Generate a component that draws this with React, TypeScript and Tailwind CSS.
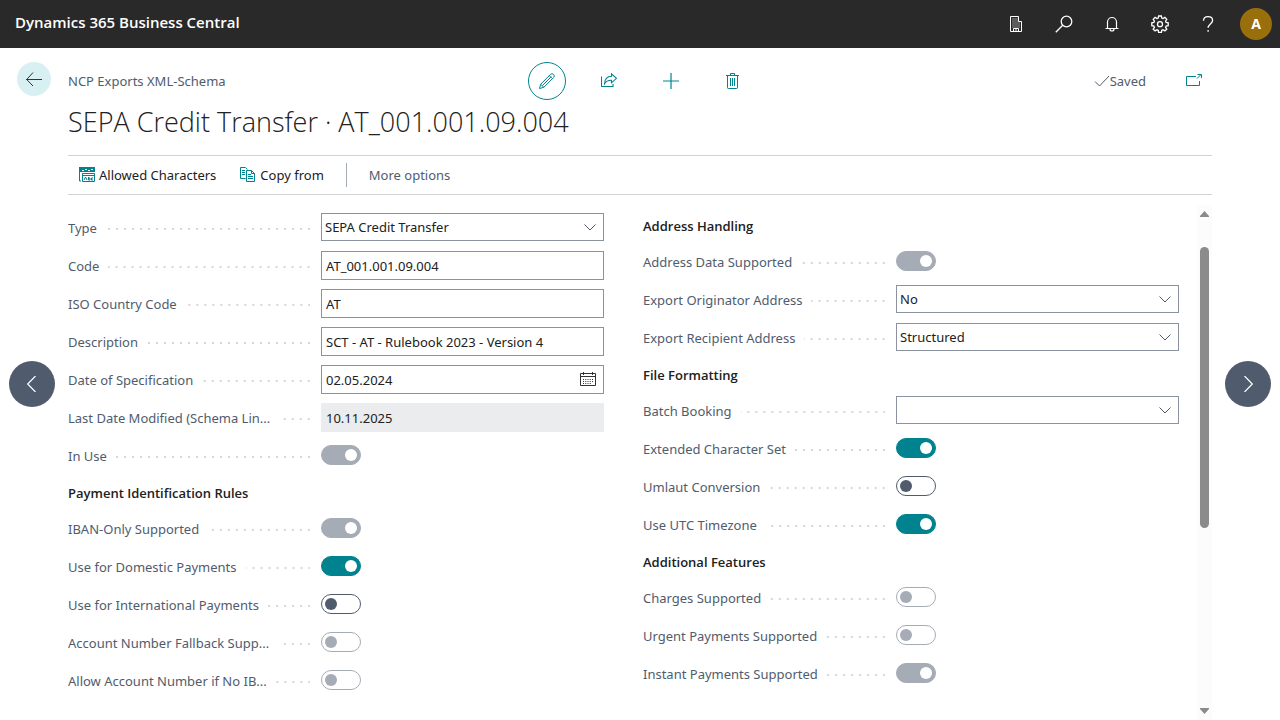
import { useId, type ReactNode } from "react";
import clsx from "clsx";

type IconProps = { children: ReactNode; className?: string; size?: number };

function Icon({ children, className, size = 16 }: IconProps) {
  return (
    <svg
      width={size}
      height={size}
      viewBox={`0 0 ${size} ${size}`}
      fill="none"
      stroke="currentColor"
      strokeWidth={1}
      className={clsx("shrink-0", className)}
      aria-hidden="true"
    >
      {children}
    </svg>
  );
}

function Chevron() {
  return (
    <Icon className="pointer-events-none absolute right-[6px] top-[6px] text-[#505c6d]">
      <path d="M2.5 5.5 8 11l5.5-5.5" />
    </Icon>
  );
}

function Row({ label, id, children }: { label: string; id: string; children: ReactNode }) {
  return (
    <div className="flex h-[38px] items-start">
      <div className="flex h-10 w-[253px] shrink-0 items-center">
        <label htmlFor={id} className="whitespace-nowrap text-[#505c6d]">
          {label}
        </label>
        <span className="ml-[9px] mr-[11px] h-[2px] flex-1 bg-[linear-gradient(to_left,#d4d6da_2px,transparent_2px)] bg-[length:8px_2px] bg-right bg-repeat-x" />
      </div>
      {children}
    </div>
  );
}

function Toggle({ label, on = false, disabled = false }: { label: string; on?: boolean; disabled?: boolean }) {
  const id = useId();
  return (
    <Row label={label} id={id}>
      <input
        id={id}
        type="checkbox"
        role="switch"
        defaultChecked={on}
        disabled={disabled}
        className="mt-2 flex h-5 w-10 appearance-none items-center rounded-full border border-[#505c6d] px-[3px] before:size-3 before:rounded-full before:bg-[#505c6d] checked:justify-end checked:border-[#00838f] checked:bg-[#00838f] checked:before:bg-white disabled:border-[#a6acb6] disabled:before:bg-[#a6acb6] disabled:checked:bg-[#a6acb6] disabled:checked:before:bg-white"
      />
    </Row>
  );
}

function Text({ label, value, readOnly = false }: { label: string; value: string; readOnly?: boolean }) {
  const id = useId();
  return (
    <Row label={label} id={id}>
      <input
        id={id}
        defaultValue={value}
        readOnly={readOnly}
        className={clsx(
          "mt-1 h-[29px] min-w-0 flex-1 border px-1 text-[#212121] outline-none",
          readOnly ? "border-[#ebecee] bg-[#ebecee]" : "border-[#8b93a1] bg-white"
        )}
      />
    </Row>
  );
}

function DateField({ label, value }: { label: string; value: string }) {
  const id = useId();
  return (
    <Row label={label} id={id}>
      <div className="mt-1 flex h-[29px] min-w-0 flex-1 items-center border border-[#8b93a1]">
        <input id={id} defaultValue={value} className="h-[27px] min-w-0 flex-1 px-1 text-[#212121] outline-none" />
        <button type="button" aria-label="Choose date" className="mr-[7px] text-[#333]">
          <Icon>
            <path d="M.5 1.5h15v12H.5zM.5 4.5h15M3.500 0v3M12.500 0v3" />
            <path d="M3 7.500h10M3 9.500h10M3 11.500h8" strokeDasharray="1 1.25" />
          </Icon>
        </button>
      </div>
    </Row>
  );
}

function Select({ label, value }: { label: string; value: string }) {
  const id = useId();
  return (
    <Row label={label} id={id}>
      <div className="relative mt-1 min-w-0 flex-1">
        <select
          id={id}
          defaultValue={value}
          className="block h-7 w-full appearance-none border border-[#8b93a1] bg-white px-[3px] pt-px text-[#212121] outline-none"
        >
          <option value={value}>{value}</option>
        </select>
        <Chevron />
      </div>
    </Row>
  );
}

function Heading({ children }: { children: ReactNode }) {
  return (
    <h2 className="flex h-[35px] items-center pt-[2px] font-['Open_Sans',sans-serif] font-semibold text-[#212121]">
      {children}
    </h2>
  );
}

function TopBar() {
  return (
    <header className="flex h-12 shrink-0 items-center justify-between bg-[#292929] pl-[15px] pr-2 text-white">
      <span className="pb-1 font-['Open_Sans',sans-serif] text-[15px] font-semibold">Dynamics 365 Business Central</span>
      <div className="flex items-center">
        <button type="button" aria-label="Company" className="flex w-12 justify-center">
          <Icon>
            <path d="M2.5.5h8v5h3v10h-11zM5.5 15.5v-3h5v3M8 13v2" />
            <path d="M4.5 3h5M4.5 5h5M4.5 7h8M4.5 9h8M4.5 11h8" strokeDasharray="1 1" />
          </Icon>
        </button>
        <button type="button" aria-label="Search" className="flex w-12 justify-center">
          <Icon size={18}>
            <circle cx="11.5" cy="6.5" r="5.3" strokeWidth="1.3" />
            <path d="M7.7 10.3.8 17.2" strokeWidth="1.3" />
          </Icon>
        </button>
        <button type="button" aria-label="Notifications" className="flex w-12 justify-center">
          <Icon>
            <path d="M3.5 12.5V6a4.5 4.5 0 0 1 9 0v6.5M1.5 12.5h13M6 13a2 2 0 0 0 4 0" strokeWidth="1.2" />
          </Icon>
        </button>
        <button type="button" aria-label="Settings" className="flex w-12 justify-center">
          <Icon size={18}>
            <path
              d="M7.6 1h2.800l.4 2.100 1.300.5 1.800-1.200 1.900 1.900-1.200 1.800.5 1.300 2.100.4v2.800l-2.100.4-.5 1.300 1.200 1.800-1.900 1.900-1.800-1.200-1.300.5-.4 2.100H7.600l-.4-2.100-1.300-.5-1.800 1.200-1.900-1.900 1.200-1.800-.5-1.300-2.100-.4V7.800l2.100-.4.5-1.300-1.200-1.800 1.900-1.900 1.800 1.200 1.300-.5z"
              strokeWidth="1.3"
            />
            <circle cx="9" cy="9.2" r="2.5" strokeWidth="1.3" />
          </Icon>
        </button>
        <button type="button" aria-label="Help" className="flex w-12 justify-center">
          <Icon>
            <path d="M3.5 4.8C3.5 2.300 5.300.7 8 .7s4.600 1.500 4.600 3.800c0 3.200-4.500 3.700-4.500 7.200M8.100 14v1.700" strokeWidth="1.3" />
          </Icon>
        </button>
        <button
          type="button"
          aria-label="Account"
          className="ml-2 flex size-8 items-center justify-center rounded-full bg-[#986f0b] text-sm font-bold"
        >
          A
        </button>
      </div>
    </header>
  );
}

function PageActions() {
  return (
    <div className="flex items-center gap-6 text-[#00838f]">
      <button
        type="button"
        aria-label="Edit"
        className="flex size-[38px] items-center justify-center rounded-full border border-[#00838f]"
      >
        <Icon size={18}>
          <path d="m1.5 16.5 1.2-4.3L12.6 2.3a2.2 2.2 0 0 1 3.1 3.1L5.8 15.3zM2.7 12.2l3.1 3.1M4.4 13.6l8.9-8.9M11.3 3.6l3.1 3.1" />
        </Icon>
      </button>
      <button type="button" aria-label="Share" className="flex size-[38px] items-center justify-center">
        <Icon>
          <path d="M.5 3.5v10H12V11M10.5.8l5 4.5-5 4.5V7.300C7 7.100 5.200 8.100 3.500 10.800 3.700 6.300 6 3.500 10.500 3.300z" strokeWidth="1.1" />
        </Icon>
      </button>
      <button type="button" aria-label="New" className="flex size-[38px] items-center justify-center">
        <Icon>
          <path d="M8 0v16M0 8h16" strokeWidth="1.2" />
        </Icon>
      </button>
      <button type="button" aria-label="Delete" className="flex size-[38px] items-center justify-center">
        <Icon>
          <path d="M1 2.5h13M5.5 2.5v-2h4v2M2.5 2.5v12.200a.8.8 0 0 0 .8.8h8.400a.8.8 0 0 0 .8-.8V2.500M5.500 5v8M7.500 5v8M9.500 5v8" />
        </Icon>
      </button>
    </div>
  );
}

function ScrollBar() {
  return (
    <div className="flex w-[15px] shrink-0 flex-col items-center bg-[#fcfcfc] py-[6px]" aria-hidden="true">
      <svg width="9" height="6" className="shrink-0 text-[#8b8b8b]" fill="currentColor">
        <path d="M4.5 0 9 5v1H0V5z" />
      </svg>
      <div className="flex w-[9px] flex-1 flex-col pt-[30px]">
        <div className="h-[61%] rounded-full bg-[#8b8b8b]" />
      </div>
      <svg width="9" height="6" className="shrink-0 text-[#8b8b8b]" fill="currentColor">
        <path d="M4.5 6 9 1V0H0v1z" />
      </svg>
    </div>
  );
}

export default function App() {
  return (
    <div className="flex h-screen flex-col overflow-hidden bg-white font-['Noto_Sans','Open_Sans',sans-serif] text-[13px] text-[#212121]">
      <TopBar />

      <div className="grid shrink-0 grid-cols-[1fr_auto_1fr] items-center pl-[17px] pr-[78px] pt-[14px]">
        <div className="flex items-center">
          <button
            type="button"
            aria-label="Back"
            className="mb-1 mr-[17px] flex size-[34px] items-center justify-center rounded-full bg-[#d9f0f2] text-[#333]"
          >
            <Icon>
              <path d="M0 8.5h16M7 1.5.7 8.5 7 15" />
            </Icon>
          </button>
          <a href="#" className="pt-[2px] text-[#505c6d]">
            NCP Exports XML-Schema
          </a>
        </div>
        <div className="ml-[61px]">
          <PageActions />
        </div>
        <div className="flex items-center justify-end text-[#505c6d]">
          <Icon>
            <path d="m1 8.5 4.5 4.5L15 3" />
          </Icon>
          <span className="pt-[2px]">Saved</span>
          <button type="button" aria-label="Open in new window" className="ml-10 text-[#00838f]">
            <Icon>
              <path d="M10 3.5H.5v9h13V8M11 5.5l4-4M11.5 1.5h4V5" />
            </Icon>
          </button>
        </div>
      </div>

      <main className="flex min-h-0 flex-1 flex-col px-[68px]">
        <h1 className="h-[55px] font-['Open_Sans',sans-serif] text-[27px] font-light leading-[44px]">
          SEPA Credit Transfer · AT_001.001.09.004
        </h1>

        <nav className="flex h-10 shrink-0 items-center border-y border-[#d0d2d6] pl-[11px]">
          <button type="button" className="flex items-center gap-1">
            <Icon className="text-[#00838f]">
              <path d="M0 0h16v5H0z" fill="currentColor" stroke="none" />
              <path d="M3 3.5h2M6 2.5h2M9 3.5h2M12 2.5h2" stroke="white" />
              <path d="M.5 5v9H2M3.5 6.5h12v8h-12zM3 8.5h12" />
              <path d="m5 13 1.5-3L8 13M9.5 10v3H11v-2H9.500M14 11h-1.500v2H14" />
            </Icon>
            <span className="pt-[2px]">Allowed Characters</span>
          </button>
          <button type="button" className="ml-6 flex items-center gap-1">
            <Icon className="text-[#00838f]">
              <path d="M5.5 11.5h-5V.5h5l2 2M2 3.5h3M2 5.5h3M2 7.5h3M6.5 3.5h5l3 3v8h-8zM11.5 3.5v3h3M8 7.5h3M8 9.5h5M8 11.5h5" />
            </Icon>
            <span className="pt-[2px]">Copy from</span>
          </button>
          <span className="mx-[22px] h-6 w-px bg-[#a6acb6]" />
          <button type="button" className="pt-[2px] text-[#505c6d]">
            More options
          </button>
        </nav>

        <div className="mt-[10px] flex min-h-0 flex-1">
          <form className="mr-[18px] grid min-w-0 flex-1 grid-cols-2 gap-x-[39px] overflow-hidden pt-[3px]">
            <section className="min-w-0 pt-px">
              <Select label="Type" value="SEPA Credit Transfer" />
              <Text label="Code" value="AT_001.001.09.004" />
              <Text label="ISO Country Code" value="AT" />
              <Text label="Description" value="SCT - AT - Rulebook 2023 - Version 4" />
              <DateField label="Date of Specification" value="02.05.2024" />
              <Text label="Last Date Modified (Schema Lin..." value="10.11.2025" readOnly />
              <Toggle label="In Use" on disabled />
              <Heading>Payment Identification Rules</Heading>
              <Toggle label="IBAN-Only Supported" on disabled />
              <Toggle label="Use for Domestic Payments" on />
              <Toggle label="Use for International Payments" />
              <Toggle label="Account Number Fallback Supp..." disabled />
              <Toggle label="Allow Account Number if No IB..." disabled />
            </section>
            <section className="min-w-0">
              <Heading>Address Handling</Heading>
              <Toggle label="Address Data Supported" on disabled />
              <Select label="Export Originator Address" value="No" />
              <Select label="Export Recipient Address" value="Structured" />
              <Heading>File Formatting</Heading>
              <Select label="Batch Booking" value="" />
              <Toggle label="Extended Character Set" on />
              <Toggle label="Umlaut Conversion" />
              <Toggle label="Use UTC Timezone" on />
              <Heading>Additional Features</Heading>
              <Toggle label="Charges Supported" disabled />
              <Toggle label="Urgent Payments Supported" disabled />
              <Toggle label="Instant Payments Supported" on disabled />
            </section>
          </form>
          <ScrollBar />
        </div>
      </main>

      <button
        type="button"
        aria-label="Previous record"
        className="fixed left-[9px] top-[calc(50%+24px)] flex size-[46px] -translate-y-1/2 items-center justify-center rounded-full bg-[#505c6d] text-white"
      >
        <Icon>
          <path d="M11.5 0 3.7 8l7.8 8" strokeWidth="1.2" />
        </Icon>
      </button>
      <button
        type="button"
        aria-label="Next record"
        className="fixed right-[9px] top-[calc(50%+24px)] flex size-[46px] -translate-y-1/2 items-center justify-center rounded-full bg-[#505c6d] text-white"
      >
        <Icon>
          <path d="m4.500 0 7.800 8-7.800 8" strokeWidth="1.2" />
        </Icon>
      </button>
    </div>
  );
}
